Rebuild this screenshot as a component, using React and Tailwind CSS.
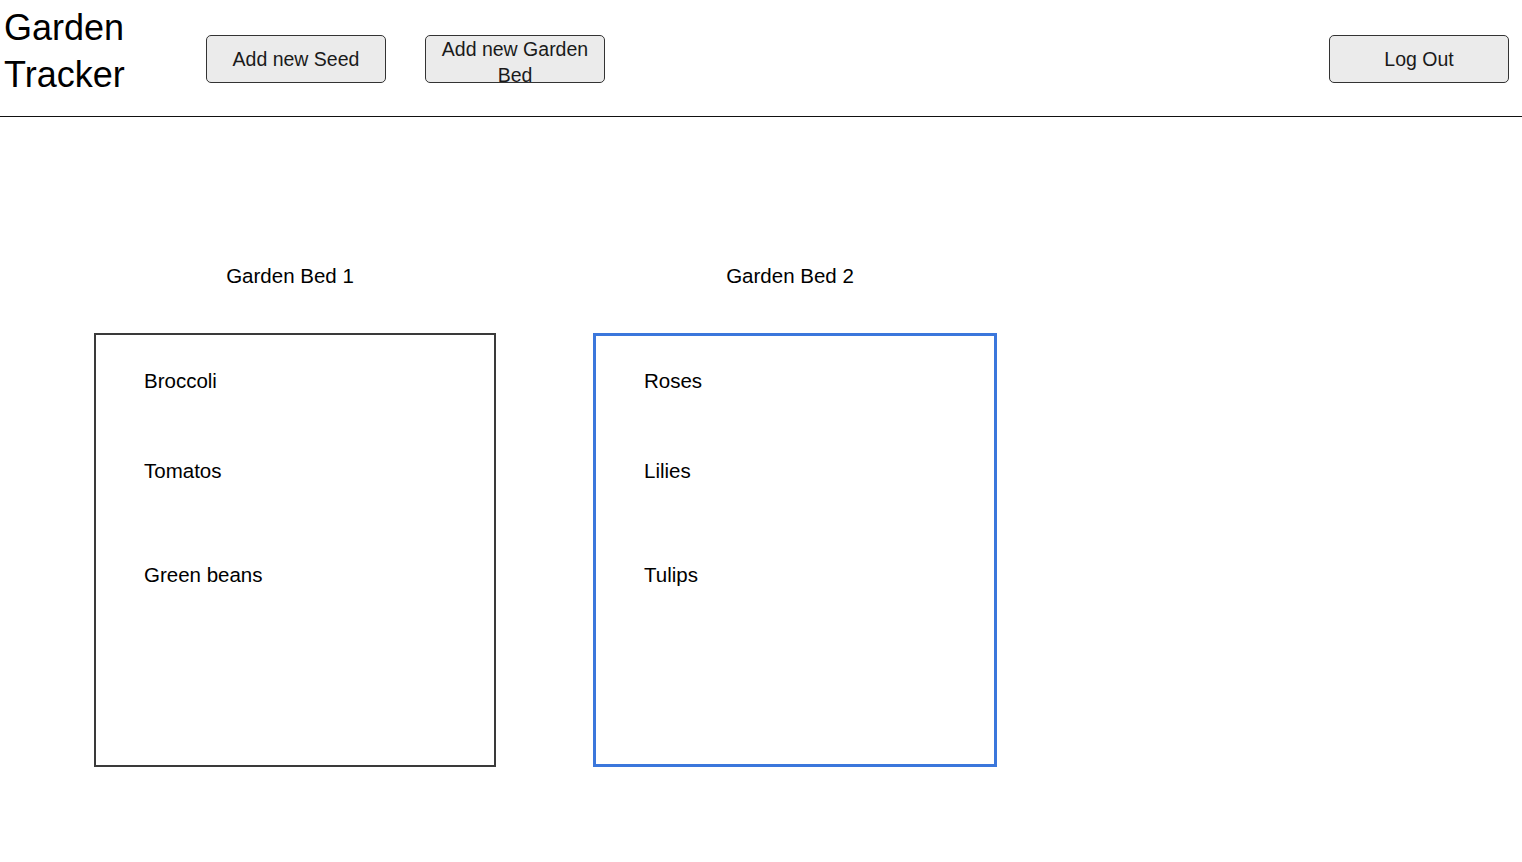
const beds = [
  {
    name: "Garden Bed 1",
    plants: ["Broccoli", "Tomatos", "Green beans"],
    box: "w-[402px] border-2 border-[#3a3a3a] pt-[1px]",
  },
  {
    name: "Garden Bed 2",
    plants: ["Roses", "Lilies", "Tulips"],
    box: "w-[404px] border-[3px] border-[#3b77dc]",
  },
];

function HeaderButton({ children, wrap }) {
  return (
    <button
      type="button"
      className={`h-[48px] w-[180px] shrink-0 rounded-[5px] border border-[#333] bg-[#ebebeb] text-center text-[19.5px] text-[#1a1a1a] ${
        wrap ? "block pt-[1px] leading-[25.6px] overflow-visible self-start" : "flex items-center justify-center leading-[24px]"
      }`}
    >
      {wrap ? <span className="block h-[46px] overflow-visible">{children}</span> : children}
    </button>
  );
}

function Bed({ name, plants, box }) {
  return (
    <div className="flex flex-col">
      <div className="pr-[10px] text-center text-[20.5px] leading-[24px] text-black">{name}</div>
      <div className={`mt-[45px] h-[434px] ${box} pl-[48px]`}>
        <div className="mt-[33px] text-[20.5px] leading-[24px] text-black">{plants[0]}</div>
        <div className="mt-[66px] text-[20.5px] leading-[24px] text-black">{plants[1]}</div>
        <div className="mt-[80px] text-[20.5px] leading-[24px] text-black">{plants[2]}</div>
      </div>
    </div>
  );
}

export default function App() {
  return (
    <div
      className="min-h-[862px] w-full bg-white text-black"
      style={{ fontFamily: '"Liberation Sans", Arial, sans-serif' }}
    >
      <header className="flex h-[117px] items-start border-b border-[#111] pl-[4px] pr-[13px]">
        <h1 className="mt-[4px] w-[202px] shrink-0 text-[36px] font-normal leading-[47px]">
          Garden
          <br />
          Tracker
        </h1>
        <div className="mt-[35px] flex gap-[39px]">
          <HeaderButton>Add new Seed</HeaderButton>
          <HeaderButton wrap>Add new Garden Bed</HeaderButton>
        </div>
        <div className="ml-auto mt-[35px]">
          <HeaderButton>Log Out</HeaderButton>
        </div>
      </header>

      <main className="flex gap-[97px] pl-[94px] pt-[147px]">
        {beds.map((b) => (
          <Bed key={b.name} {...b} />
        ))}
      </main>
    </div>
  );
}
